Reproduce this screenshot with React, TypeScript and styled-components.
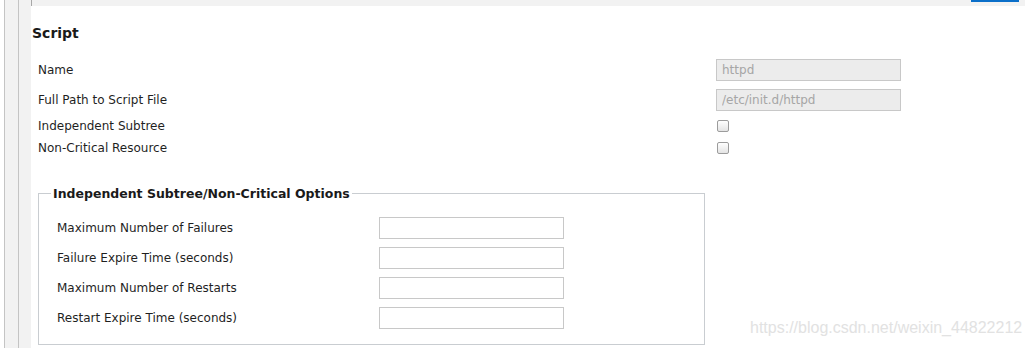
import styled, { createGlobalStyle } from "styled-components";

const GlobalStyle = createGlobalStyle`
  html, body {
    margin: 0;
    padding: 0;
    background: #ffffff;
  }
  body {
    font-family: "DejaVu Sans", "Liberation Sans", sans-serif;
    color: #1f1f1f;
  }
`;

type Field = { label: string; value?: string; kind: "text" | "check" };

const scriptFields: Array<Field> = [
  { label: "Name", value: "httpd", kind: "text" },
  { label: "Full Path to Script File", value: "/etc/init.d/httpd", kind: "text" },
  { label: "Independent Subtree", kind: "check" },
  { label: "Non-Critical Resource", kind: "check" },
];

const optionFields = [
  "Maximum Number of Failures",
  "Failure Expire Time (seconds)",
  "Maximum Number of Restarts",
  "Restart Expire Time (seconds)",
];

const App = () => {
  return (
    <>
      <GlobalStyle />
      <Page>
        <Gutter>
          <GutterStrip />
          <GutterStrip $last />
        </Gutter>
        <Main>
          <TopBand>
            <ActiveTab />
          </TopBand>
          <Content>
            <Heading>Script</Heading>
            <FieldList>
              {scriptFields.map((field) => (
                <Row key={field.label} $tall={field.kind === "text"}>
                  <Label>{field.label}</Label>
                  {field.kind === "text" ? (
                    <DisabledInput value={field.value} readOnly disabled />
                  ) : (
                    <Check type="checkbox" />
                  )}
                </Row>
              ))}
            </FieldList>
            <Options>
              <Legend>Independent Subtree/Non-Critical Options</Legend>
              {optionFields.map((label) => (
                <OptionRow key={label}>
                  <OptionLabel>{label}</OptionLabel>
                  <TextInput type="text" />
                </OptionRow>
              ))}
            </Options>
          </Content>
        </Main>
        <Watermark>https://blog.csdn.net/weixin_44822212</Watermark>
      </Page>
    </>
  );
};

const Page = styled.div`
  position: relative;
  display: flex;
  width: 1031px;
  height: 348px;
  overflow: hidden;
  background: #ffffff;
`;

const Gutter = styled.div`
  display: flex;
  padding-left: 4px;
  flex-shrink: 0;
`;

const GutterStrip = styled.div<{ $last?: boolean }>`
  width: ${(p) => (p.$last ? "12px" : "13px")};
  border-left: 1px solid #c4c4c4;
  background: #f2f2f2;
`;

const Main = styled.div`
  display: flex;
  flex-direction: column;
  flex: 1;
  padding-right: 6px;
`;

const TopBand = styled.div`
  display: flex;
  justify-content: flex-end;
  height: 6px;
  background: #f2f2f2;
  border-left: 1px solid #a8a8a8;
  padding-right: 6px;
`;

const ActiveTab = styled.div`
  width: 48px;
  height: 2px;
  background: #0b6fc9;
`;

const Content = styled.div`
  display: flex;
  flex-direction: column;
  padding: 19px 0 0 1px;
`;

const Heading = styled.h2`
  margin: 0 0 14px 0;
  font-size: 14px;
  line-height: 16px;
  font-weight: bold;
  color: #1a1a1a;
`;

const FieldList = styled.div`
  display: flex;
  flex-direction: column;
  padding-left: 6px;
`;

const Row = styled.div<{ $tall: boolean }>`
  display: flex;
  align-items: center;
  height: ${(p) => (p.$tall ? "30px" : "22px")};
`;

const Label = styled.span`
  width: 679px;
  font-size: 12px;
  color: #1f1f1f;
`;

const DisabledInput = styled.input`
  box-sizing: border-box;
  width: 185px;
  height: 22px;
  margin: 0 0 0 -1px;
  padding: 0 5px;
  border: 1px solid #c8c8c8;
  background: #ececec;
  font-family: "DejaVu Sans", sans-serif;
  font-size: 12px;
  color: #a6a6a6;
  -webkit-text-fill-color: #a6a6a6;
  opacity: 1;
`;

const Check = styled.input`
  appearance: none;
  box-sizing: border-box;
  width: 12px;
  height: 12px;
  margin: 0;
  border: 1px solid #9c9c9c;
  border-radius: 2px;
  background: linear-gradient(#ffffff, #e4e4e4);
`;

const Options = styled.fieldset`
  width: 667px;
  box-sizing: border-box;
  margin: 27px 0 0 6px;
  padding: 12px 0 11px 18px;
  border: 1px solid #c9cdd1;
  min-width: 0;
`;

const Legend = styled.legend`
  margin-left: -6px;
  padding: 0 2px;
  font-size: 12.5px;
  line-height: 15px;
  font-weight: bold;
  color: #1a1a1a;
`;

const OptionRow = styled.div`
  display: flex;
  align-items: center;
  height: 30px;
`;

const OptionLabel = styled.span`
  width: 322px;
  font-size: 12px;
  color: #1f1f1f;
`;

const TextInput = styled.input`
  box-sizing: border-box;
  width: 185px;
  height: 22px;
  margin: 0;
  padding: 0 5px;
  border: 1px solid #c8c8c8;
  background: #ffffff;
  font-family: "DejaVu Sans", sans-serif;
  font-size: 12px;
`;

const Watermark = styled.div`
  position: absolute;
  left: 750px;
  top: 319px;
  font-family: "Liberation Sans", Arial, sans-serif;
  font-size: 16px;
  color: #e2e2e2;
  pointer-events: none;
`;

export default App;
